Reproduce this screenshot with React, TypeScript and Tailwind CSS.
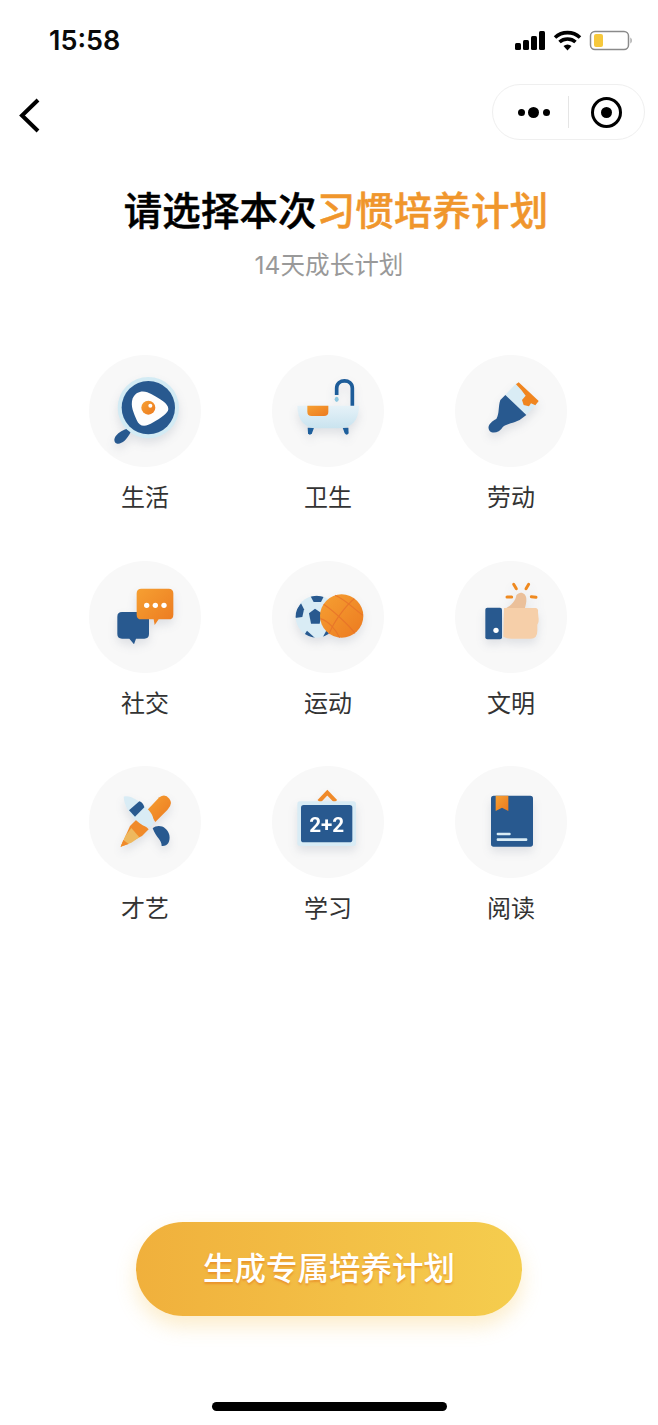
const cjk = "font-['Inter','Noto_Sans_CJK_SC',sans-serif]"

function Gradients() {
  return (
    <svg width="0" height="0" className="absolute">
      <defs>
        <linearGradient id="orange" x1="0" y1="0" x2="1" y2="1">
          <stop offset="0" stopColor="#f6a032" />
          <stop offset="1" stopColor="#ec7a20" />
        </linearGradient>
        <linearGradient id="ice" x1="0" y1="0" x2="0" y2="1">
          <stop offset="0" stopColor="#e6f2f8" />
          <stop offset="1" stopColor="#c9e3ef" />
        </linearGradient>
      </defs>
    </svg>
  )
}

function PanIcon() {
  return (
    <>
      <path d="M152 262C140 285 125 298 112 296C102 294 100 282 108 272C116 262 130 254 146 250Z" fill="#28598f" />
      <circle cx="205" cy="188" r="92" fill="#d3ebf4" />
      <circle cx="205" cy="188" r="80" fill="#28598f" />
      <path d="M158 160C170 135 195 135 215 148C240 162 265 175 265 192C265 205 240 220 220 232C195 248 178 245 170 225C162 205 150 185 158 160Z" fill="#fdfdfd" />
      <circle cx="205" cy="188" r="21" fill="url(#orange)" />
      <circle cx="211" cy="182" r="6" fill="#fff" />
    </>
  )
}

function BathIcon() {
  return (
    <>
      <path d="M215 150V130C215 100 262 100 262 130V184" fill="none" stroke="#1d5c99" strokeWidth="11" />
      <ellipse cx="215" cy="163" rx="6" ry="8" fill="#8cc7e0" />
      <path d="M128 248H147L141 265Q134 273 129 265Z" fill="#1e5f9c" />
      <path d="M233 248H250L251 265Q245 273 239 265Z" fill="#1e5f9c" />
      <path d="M97 182H282C282 225 260 250 220 250H155C120 250 97 225 97 182Z" fill="url(#ice)" />
      <path d="M127 182H190V200Q190 213 177 213H140Q127 213 127 200Z" fill="url(#orange)" />
    </>
  )
}

function BrushIcon() {
  return (
    <>
      <path d="M205 115L272 170L235 210L172 150Z" fill="#d9ecf5" />
      <path d="M172 150L235 210L215 225C195 235 180 235 165 245C155 262 135 268 125 258C115 245 128 230 145 222C155 205 150 185 157 165Z" fill="#28598f" />
      <path d="M204 118L212 112L272 168L262 181L249 175L243 184L227 180L222 165L233 152L220 135Z" fill="#f0851f" />
    </>
  )
}

function ChatIcon() {
  return (
    <>
      <path d="M126 168H193Q207 168 207 182V234Q207 248 193 248H168L162 265L148 248H126Q112 248 112 234V182Q112 168 126 168Z" fill="#28598f" />
      <path d="M184 98H266Q280 98 280 112V176Q280 190 266 190H236L224 207L221 190H184Q170 190 170 176V112Q170 98 184 98Z" fill="url(#orange)" />
      <circle cx="200" cy="148" r="8" fill="#fff" />
      <circle cx="226" cy="148" r="8" fill="#fff" />
      <circle cx="252" cy="148" r="8" fill="#fff" />
    </>
  )
}

function BallsIcon() {
  return (
    <>
      <clipPath id="soccer">
        <circle cx="155" cy="182" r="63" />
      </clipPath>
      <circle cx="155" cy="182" r="63" fill="#d9ecf5" />
      <g clipPath="url(#soccer)" fill="#28598f">
        <path d="M150 158L170 172L164 203L138 203L132 172Z" />
        <path d="M135 118H178L168 138L146 138Z" />
        <path d="M108 142L88 170V186L112 183L117 160Z" />
        <path d="M126 224L150 246H112Z" />
        <path d="M185 222L172 246H200Z" />
      </g>
      <circle cx="230" cy="180" r="65" fill="url(#orange)" />
      <g fill="none" stroke="#e6702a" strokeWidth="3.5" opacity="0.75">
        <path d="M176 145C205 165 250 205 270 232" />
        <path d="M268 128C240 150 205 200 192 234" />
        <path d="M210 118C240 130 262 155 294 178" />
        <path d="M166 188C190 195 212 220 224 245" />
      </g>
    </>
  )
}

function ThumbIcon() {
  return (
    <>
      <g stroke="#ef8a20" strokeWidth="9" strokeLinecap="round">
        <path d="M197 85L205 98M242 85L234 98M177 123H191M250 122L264 124" />
      </g>
      <path d="M172 158C190 148 203 135 205 118C215 104 234 110 235 128C236 140 232 150 230 158Z" fill="#ebc09a" />
      <path d="M168 156H262Q272 156 270 170L272 190Q273 200 268 206L268 224Q268 248 248 248H190Q176 248 166 242Z" fill="#f6cfa9" />
      <rect x="112" y="155" width="50" height="95" rx="6" fill="#28598f" />
      <circle cx="144" cy="223" r="8" fill="#fff" />
    </>
  )
}

function PaintIcon() {
  return (
    <>
      <path d="M202 150L238 112Q255 100 268 116Q280 132 262 150L226 186Z" fill="url(#orange)" />
      <path d="M122 260L150 198L172 176L206 208L186 228Z" fill="#f08a2a" />
      <path d="M122 260L136 228L154 204L178 232L154 248Z" fill="#eeb85e" />
      <path d="M122 260L130 240L146 252Z" fill="#f08a2a" />
      <path d="M218 205C235 190 262 200 268 225C272 245 262 260 245 258C245 240 230 235 218 205Z" fill="#28598f" />
      <path d="M131 110C150 105 175 120 200 145C216 158 226 180 218 194C208 208 188 198 170 182C150 165 132 135 131 110Z" fill="#d9ecf5" />
      <path d="M147 151L178 124C186 126 191 133 193 142L165 170Z" fill="#28598f" />
    </>
  )
}

function BoardIcon() {
  return (
    <>
      <path d="M162 124L187 98L212 124" fill="none" stroke="#f08a2a" strokeWidth="12" />
      <rect x="97" y="124" width="176" height="134" rx="8" fill="#d9ecf5" />
      <rect x="108" y="135" width="154" height="112" rx="8" fill="#28598f" />
      <text x="185" y="215" fontSize="62" fontWeight="700" fill="#fff" textAnchor="middle" fontFamily="Roboto, sans-serif">
        2+2
      </text>
    </>
  )
}

function BookIcon() {
  return (
    <>
      <rect x="129" y="107" width="126" height="153" rx="8" fill="#28598f" />
      <path d="M143 107H181V153L162 143L143 153Z" fill="url(#orange)" />
      <rect x="146" y="218" width="42" height="8" rx="3" fill="#d9ecf5" />
      <rect x="146" y="235" width="92" height="8" rx="3" fill="#d9ecf5" />
    </>
  )
}

const rows = [
  { name: '生活', box: '27 30 336 336', icon: <PanIcon /> },
  { name: '卫生', box: '21 30 336 336', icon: <BathIcon /> },
  { name: '劳动', box: '21 30 336 336', icon: <BrushIcon /> },
  { name: '社交', box: '27 15 336 336', icon: <ChatIcon /> },
  { name: '运动', box: '21 15 336 336', icon: <BallsIcon /> },
  { name: '文明', box: '21 15 336 336', icon: <ThumbIcon /> },
  { name: '才艺', box: '27 18 336 336', icon: <PaintIcon /> },
  { name: '学习', box: '21 18 336 336', icon: <BoardIcon /> },
  { name: '阅读', box: '21 18 336 336', icon: <BookIcon /> },
]

export default function App() {
  return (
    <div className={`w-[658px] h-[1425px] bg-white flex flex-col overflow-hidden ${cjk}`}>
      <Gradients />

      {/* status bar */}
      <div className="h-[84px] pl-[49px] pr-[26px] pt-[25px] flex justify-between items-start">
        <div className="text-[27px] leading-[31px] font-semibold text-[#0a0a0a] font-['Inter',sans-serif]">15:58</div>
        <svg width="118" height="22" viewBox="0 0 118 22" className="mt-[5px]">
          <rect x="1" y="13" width="6" height="7" rx="1.5" />
          <rect x="9" y="10" width="6" height="10" rx="1.5" />
          <rect x="17" y="6" width="6" height="14" rx="1.5" />
          <rect x="25" y="1" width="6" height="19" rx="1.5" />
          <path d="M41 7.5C48 1 59 1 66 7.5" fill="none" stroke="#000" strokeWidth="3.6" />
          <path d="M45.5 12C50 8 57 8 61.500 12" fill="none" stroke="#000" strokeWidth="3.6" />
          <path d="M49.500 16C52 14 55 14 57.500 16L53.500 20.500Z" />
          <rect x="76.500" y="1.500" width="38" height="18" rx="4.500" fill="none" stroke="#8a8a8a" strokeWidth="1.500" />
          <rect x="80" y="4" width="9" height="13" rx="2" fill="#f6c83c" />
          <path d="M116.500 7.500C118 8.500 118 12.500 116.500 13.500Z" fill="#8a8a8a" />
        </svg>
      </div>

      {/* nav bar */}
      <div className="h-[56px] pl-[19px] pr-[13px] flex justify-between items-center">
        <svg width="21" height="35" viewBox="0 0 21 35" fill="none" stroke="#000" strokeWidth="4" className="mt-[7px]">
          <path d="M19 2L3 17.500L19 33" />
        </svg>
        <div className="w-[153px] h-[56px] rounded-full border border-[#efefef] flex items-center">
          <div className="w-[76px] h-[32px] pl-[6px] flex items-center justify-center gap-[3.500px] border-r border-[#e5e5e5]">
            <span className="w-[7px] h-[7px] rounded-full bg-black" />
            <span className="w-[11px] h-[11px] rounded-full bg-black" />
            <span className="w-[7px] h-[7px] rounded-full bg-black" />
          </div>
          <div className="flex-1 flex justify-center">
            <div className="w-[31px] h-[31px] rounded-full border-[3.5px] border-black flex items-center justify-center">
              <span className="w-[11px] h-[11px] rounded-full bg-black" />
            </div>
          </div>
        </div>
      </div>

      {/* heading */}
      <div className="mt-[46px] pl-[14px] text-center text-[38.400px] leading-[50px] font-medium tracking-[0.2px] text-black whitespace-nowrap [-webkit-text-stroke:0.5px]">
        请选择本次<span className="text-[#f0962c]">习惯培养计划</span>
      </div>
      <div className="mt-[13px] text-center text-[24.600px] leading-[32px] text-[#999]">14天成长计划</div>

      {/* categories */}
      <div className="mt-[74px] ml-[89px] grid grid-cols-[112px_112px_112px] gap-x-[71px] gap-y-[46.500px]">
        {rows.map((r) => (
          <div key={r.name} className="flex flex-col items-center">
            <div className="w-[112px] h-[112px] rounded-full bg-[#f8f8f8]">
              <svg width="112" height="112" viewBox={r.box} className="drop-shadow-[0_5px_5px_rgba(40,60,90,0.12)]">
                {r.icon}
              </svg>
            </div>
            <div className="mt-[15px] text-[24px] leading-[32px] text-[#333]">{r.name}</div>
          </div>
        ))}
      </div>

      {/* bottom button */}
      <div className="mt-auto flex flex-col items-center">
        <button className="w-[386px] h-[94px] rounded-full bg-linear-to-r from-[#f0b03c] to-[#f5cd4e] text-white text-[31.500px] font-medium shadow-[0_10px_20px_rgba(245,190,70,0.28)] [text-shadow:0_2px_2px_rgba(225,120,30,0.55)]">
          生成专属培养计划
        </button>
        <div className="mt-[86px] mb-[14px] w-[235px] h-[9px] rounded-full bg-black" />
      </div>
    </div>
  )
}
